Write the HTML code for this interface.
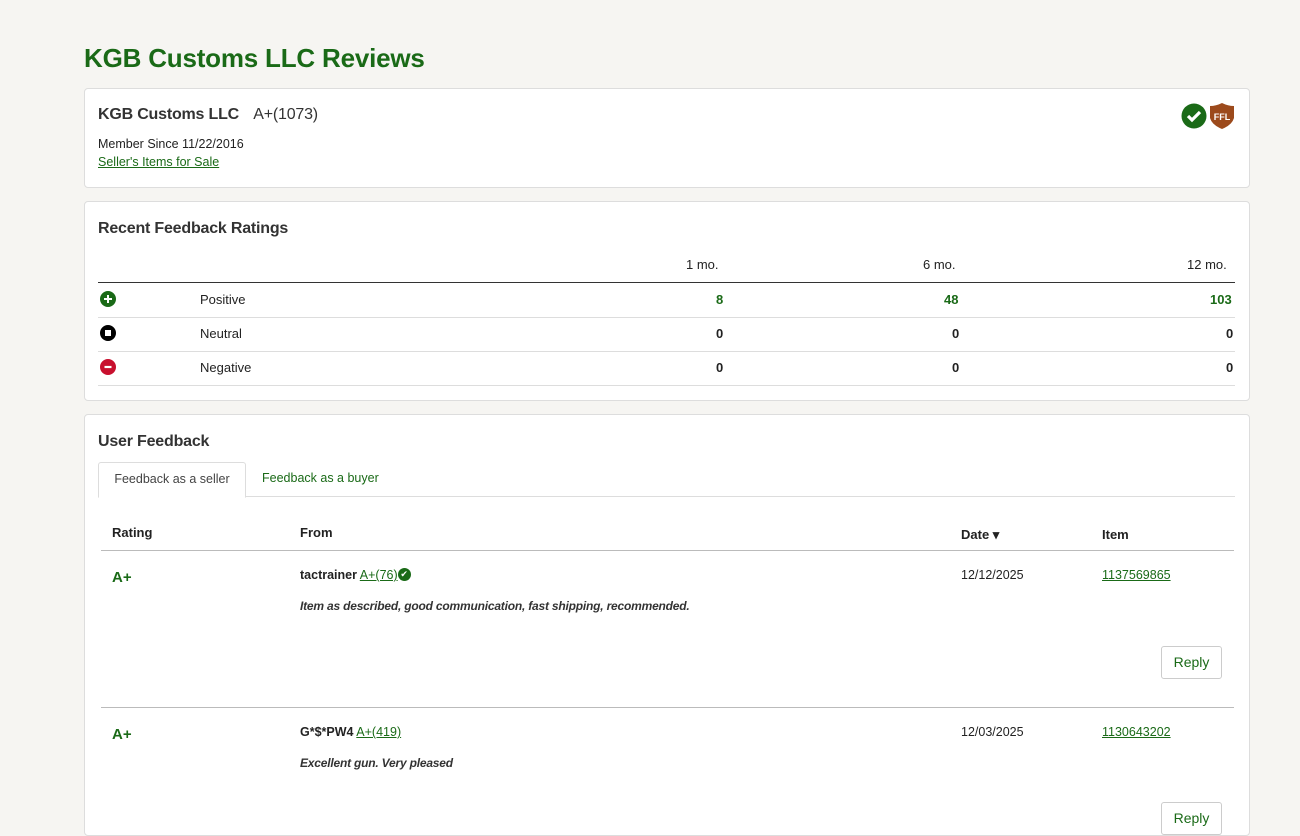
<!DOCTYPE html>
<html><head><meta charset="utf-8"><style>
html,body{margin:0;height:822px;overflow:hidden}
body{background:#f6f5f2;font-family:"Liberation Sans",sans-serif;color:#222;}
h1{position:absolute;left:84px;top:43px;margin:0;font-size:26px;color:#1a6a17;font-weight:bold;letter-spacing:-0.2px}
.card{position:absolute;left:84px;width:1164px;background:#fff;border:1px solid #ddd;border-radius:4px;}
.abs{position:absolute;white-space:nowrap}
a{color:#1a6a17;text-decoration:underline}
.g{color:#1a6a17}
.b{font-weight:bold}
.line{position:absolute;height:1px;background:#ddd}
</style></head><body>
<h1>KGB Customs LLC Reviews</h1>
<div class="card" style="top:88px;height:98px">
<div class="abs" style="left:13px;top:17px;font-size:16px;font-weight:bold;color:#333;letter-spacing:-0.2px">KGB Customs LLC <span style="font-weight:normal;margin-left:10px">A+(1073)</span></div>
<div class="abs" style="left:13px;top:48px;font-size:12.5px">Member Since 11/22/2016</div>
<div class="abs" style="left:13px;top:66px;font-size:12.5px"><a>Seller's Items for Sale</a></div>
<svg class="abs" style="left:1096px;top:13px" width="56" height="28" viewBox="0 0 56 28"><circle cx="13" cy="14" r="12.5" fill="#1a6a17"/><path d="M7 14l4 4 8-8" stroke="#fff" stroke-width="3.2" fill="none"/><path d="M29 4q6 0 12-3q6 3 12 3v12q-2 7-12 11q-10-4-12-11z" fill="#9c4a1c"/><text x="41" y="18" font-size="9" font-weight="bold" fill="#fff" text-anchor="middle" font-family="Liberation Sans">FFL</text></svg>
</div>
<div class="card" style="top:201px;height:198px">
<div class="abs b" style="left:13px;top:18px;font-size:16px;color:#333;letter-spacing:-0.2px">Recent Feedback Ratings</div>
<div class="abs" style="left:601px;top:55px;font-size:13px">1 mo.</div>
<div class="abs" style="left:838px;top:55px;font-size:13px">6 mo.</div>
<div class="abs" style="left:1102px;top:55px;font-size:13px">12 mo.</div>
<div class="line" style="left:13px;top:80px;width:1137px;background:#333"></div>
<div class="line" style="left:13px;top:115px;width:1137px"></div>
<div class="line" style="left:13px;top:149px;width:1137px"></div>
<div class="line" style="left:13px;top:183px;width:1137px"></div>
<svg class="abs" style="left:15px;top:89px" width="18" height="90"><circle cx="8" cy="8" r="8" fill="#1a6a17"/><path d="M8 4v8M4 8h8" stroke="#fff" stroke-width="2"/><circle cx="8" cy="42" r="8" fill="#000"/><rect x="5" y="39" width="6" height="6" fill="#fff"/><circle cx="8" cy="76" r="8" fill="#c8102e"/><path d="M4.5 76h7" stroke="#fff" stroke-width="2.2"/></svg>
<div class="abs" style="left:115px;top:90px;font-size:13px">Positive</div>
<div class="abs" style="left:115px;top:124px;font-size:13px">Neutral</div>
<div class="abs" style="left:115px;top:158px;font-size:13px">Negative</div>
<div class="abs b g" style="left:631px;top:90px;font-size:13px">8</div>
<div class="abs b g" style="left:859px;top:90px;font-size:13px">48</div>
<div class="abs b g" style="left:1125px;top:90px;font-size:13px">103</div>
<div class="abs b" style="left:631px;top:124px;font-size:13px">0</div><div class="abs b" style="left:867px;top:124px;font-size:13px">0</div><div class="abs b" style="left:1141px;top:124px;font-size:13px">0</div>
<div class="abs b" style="left:631px;top:158px;font-size:13px">0</div><div class="abs b" style="left:867px;top:158px;font-size:13px">0</div><div class="abs b" style="left:1141px;top:158px;font-size:13px">0</div>
</div>
<div class="card" style="top:414px;height:420px">
<div class="abs b" style="left:13px;top:18px;font-size:16px;color:#333;letter-spacing:-0.2px">User Feedback</div>
<div class="line" style="left:13px;top:81px;width:1137px"></div>
<div class="abs" style="left:13px;top:47px;width:146px;height:34px;border:1px solid #ddd;border-bottom:1px solid #fff;border-radius:3px 3px 0 0;background:#fff;font-size:12.5px;color:#444;text-align:center;line-height:33px">Feedback as a seller</div>
<div class="abs g" style="left:177px;top:56px;font-size:12.5px">Feedback as a buyer</div>
<div class="abs b" style="left:27px;top:110px;font-size:13px">Rating</div>
<div class="abs b" style="left:215px;top:110px;font-size:13px">From</div>
<div class="abs b" style="left:876px;top:112px;font-size:13px">Date ▾</div>
<div class="abs b" style="left:1017px;top:112px;font-size:13px">Item</div>
<div class="line" style="left:16px;top:135px;width:1133px;background:#bbb"></div>
<div class="abs b g" style="left:27px;top:154px;font-size:15px">A+</div>
<div class="abs" style="left:215px;top:153px;font-size:12.5px"><b>tactrainer</b> <a>A+(76)</a><span style="display:inline-block;width:13px;height:13px;border-radius:50%;background:#1a6a17;color:#fff;font-size:9px;text-align:center;line-height:13px;vertical-align:2px">✔</span></div>
<div class="abs" style="left:215px;top:184px;font-size:12px;font-style:italic;font-weight:bold;color:#333;letter-spacing:-0.2px">Item as described, good communication, fast shipping, recommended.</div>
<div class="abs" style="left:876px;top:153px;font-size:12.5px">12/12/2025</div>
<div class="abs" style="left:1017px;top:153px;font-size:12.5px"><a>1137569865</a></div>
<div class="abs g" style="left:1076px;top:231px;width:59px;height:31px;border:1px solid #ccc;border-radius:3px;font-size:14px;text-align:center;line-height:31px">Reply</div>
<div class="line" style="left:16px;top:292px;width:1133px;background:#bbb"></div>
<div class="abs b g" style="left:27px;top:311px;font-size:15px">A+</div>
<div class="abs" style="left:215px;top:310px;font-size:12.5px"><b>G*$*PW4</b> <a>A+(419)</a></div>
<div class="abs" style="left:215px;top:341px;font-size:12px;font-style:italic;font-weight:bold;color:#333;letter-spacing:-0.2px">Excellent gun. Very pleased</div>
<div class="abs" style="left:876px;top:310px;font-size:12.5px">12/03/2025</div>
<div class="abs" style="left:1017px;top:310px;font-size:12.5px"><a>1130643202</a></div>
<div class="abs g" style="left:1076px;top:387px;width:59px;height:31px;border:1px solid #ccc;border-radius:3px;font-size:14px;text-align:center;line-height:31px">Reply</div>
</div>
</body></html>
